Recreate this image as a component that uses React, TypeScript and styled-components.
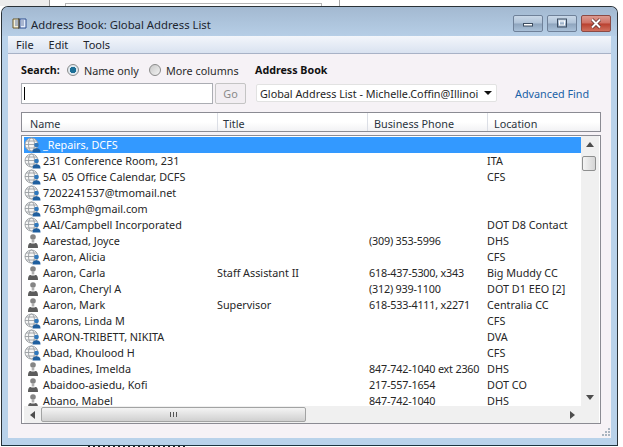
import React from 'react';
import styled, { createGlobalStyle } from 'styled-components';

const GlobalStyle = createGlobalStyle`
  html, body {
    margin: 0;
    padding: 0;
    background: #fff;
  }
  body {
    font-family: 'Noto Sans', 'Open Sans', sans-serif;
    font-size: 10.8px;
    color: #262626;
  }
`;

const Screen = styled.div`
  position: relative;
  width: 623px;
  height: 447px;
  overflow: hidden;
  background: #fff;
`;

const BackdropLeft = styled.div`
  position: absolute;
  left: 0;
  top: 0;
  width: 49px;
  height: 6px;
  background: #ececec;
  border-right: 1px solid #9a9a9a;
`;

const BackdropRule = styled.div`
  position: absolute;
  left: 65px;
  top: 3px;
  width: 255px;
  height: 3px;
  border-top: 1px solid #b5b5b5;
  border-left: 1px solid #b5b5b5;
  border-right: 1px solid #b5b5b5;
`;

const BackdropLine = styled.div`
  position: absolute;
  left: 339px;
  top: 0;
  width: 1px;
  height: 6px;
  background: #a8a8a8;
`;

const BackdropTicks = styled.div`
  position: absolute;
  left: 88px;
  top: 446px;
  width: 98px;
  height: 1px;
  background: repeating-linear-gradient(90deg, #222 0 2px, #fff 2px 5px);
`;

const Window = styled.div`
  position: absolute;
  left: 1px;
  top: 6px;
  width: 617px;
  height: 440px;
  box-sizing: border-box;
  display: flex;
  flex-direction: column;
  border: 1px solid #2a3238;
  border-bottom-color: #1d3540;
  border-radius: 7px 7px 0 0;
  background: #b9d2ea;
  overflow: hidden;
`;

const TitleBar = styled.div`
  height: 29px;
  flex: none;
  display: flex;
  align-items: center;
  padding: 4px 6px 0 10px;
  box-sizing: border-box;
  background: linear-gradient(#a3b9d1, #b6cee6);
`;

const TitleText = styled.div`
  flex: 1;
  margin: 2px 0 0 4px;
  font-size: 11.3px;
  color: #1d2630;
  white-space: nowrap;
`;

const WinButtons = styled.div`
  display: flex;
  gap: 4px;
  margin-top: -1px;
`;

const WinButton = styled.div<{ $close?: boolean }>`
  width: 28px;
  height: 15px;
  border: 1px solid ${(p) => (p.$close ? '#8c4a44' : '#6f8199')};
  border-radius: 2px;
  display: flex;
  align-items: center;
  justify-content: center;
  box-sizing: content-box;
  background: ${(p) =>
    p.$close
      ? 'linear-gradient(#dc9a90 0%, #cf7064 48%, #b8402f 52%, #d0705e 100%)'
      : 'linear-gradient(#c9d8e8 0%, #b0c3d8 48%, #8ea4bd 52%, #a9c0d8 100%)'};
`;

const Body = styled.div`
  flex: 1;
  display: flex;
  flex-direction: column;
  margin: 0 6px 7px 6px;
  min-height: 0;
`;

const MenuBar = styled.div`
  height: 18px;
  flex: none;
  display: flex;
  align-items: center;
  gap: 15px;
  padding-left: 8px;
  box-sizing: border-box;
  background: linear-gradient(#f3f6fb, #d9e2f0);
  border-bottom: 1px solid #a8b2c6;
  font-size: 11px;
  color: #20242c;
`;

const Content = styled.div`
  flex: 1;
  display: flex;
  flex-direction: column;
  padding: 8px 11px 13px 13px;
  background: #f6f2f6;
  min-height: 0;
`;

const SearchRow = styled.div`
  display: flex;
  align-items: center;
  height: 16px;
`;

const BoldLabel = styled.span`
  font-weight: 700;
  font-size: 10.7px;
  color: #111;
`;

const SearchLabel = styled(BoldLabel)`
  width: 38px;
  margin-right: 8px;
`;

const RadioLabel = styled.label<{ $width: number }>`
  display: flex;
  align-items: center;
  gap: 5px;
  width: ${(p) => p.$width}px;
  color: #2a2a2a;
`;

const RadioDot = styled.span<{ $checked?: boolean }>`
  width: 10px;
  height: 10px;
  border-radius: 50%;
  border: 1px solid #8a8a8a;
  background: ${(p) =>
    p.$checked
      ? 'radial-gradient(circle, #1c6f97 0 3px, #dfe9f0 3.5px)'
      : 'linear-gradient(135deg, #c8c8c8, #f4f4f4)'};
`;

const InputRow = styled.div`
  display: flex;
  align-items: center;
  margin-top: 5px;
  height: 20px;
`;

const SearchInput = styled.div`
  width: 188px;
  height: 19px;
  border: 1px solid #abadb3;
  background: #fff;
  display: flex;
  align-items: center;
  padding-left: 2px;
  box-sizing: content-box;
`;

const Caret = styled.span`
  width: 1px;
  height: 13px;
  background: #000;
`;

const GoButton = styled.div`
  width: 29px;
  height: 19px;
  margin-left: 2px;
  border: 1px solid #c4c4c4;
  border-radius: 2px;
  background: #f2eef2;
  color: #8a8a8a;
  display: flex;
  align-items: center;
  justify-content: center;
`;

const BookSelect = styled.div`
  width: 241px;
  height: 18px;
  margin-left: 10px;
  border: 1px solid #e2e2e2;
  border-radius: 2px;
  background: #fff;
  display: flex;
  align-items: center;
  box-sizing: border-box;
  padding: 0 4px 0 3px;
  overflow: hidden;
  white-space: nowrap;
`;

const SelectText = styled.span`
  flex: 1;
  overflow: hidden;
  color: #1f1f1f;
`;

const Arrow = styled.span`
  flex: none;
  margin-left: 6px;
  width: 0;
  height: 0;
  border-left: 4px solid transparent;
  border-right: 4px solid transparent;
  border-top: 4px solid #111;
`;

const AdvancedFind = styled.span`
  margin-left: 18px;
  color: #1a62a6;
  white-space: nowrap;
`;

const Header = styled.div`
  margin-top: 9px;
  width: 580px;
  height: 20px;
  flex: none;
  box-sizing: border-box;
  border: 1px solid #8b8b93;
  background: linear-gradient(#fff 0%, #fff 50%, #f2f2f4 100%);
  display: grid;
  grid-template-columns: 195px 150px 120px 1fr;
`;

const HeaderCell = styled.div<{ $indent: number }>`
  display: flex;
  align-items: center;
  padding: 2px 0 0 ${(p) => p.$indent}px;
  border-left: 1px solid #dcdfe6;
  color: #2b3440;
  &:first-child {
    border-left: none;
  }
`;

const ListBox = styled.div`
  margin-top: 3px;
  width: 580px;
  height: 289px;
  flex: none;
  box-sizing: border-box;
  border: 1px solid #8b8b93;
  background: #fff;
  padding: 1px 0 0 2px;
  display: grid;
  grid-template-columns: 557px 18px;
  grid-template-rows: 269px 17px;
`;

const Rows = styled.div`
  overflow: hidden;
`;

const Row = styled.div<{ $selected?: boolean }>`
  height: 16px;
  box-sizing: border-box;
  padding-bottom: 1px;
  display: grid;
  grid-template-columns: 19px 174px 152px 118px 1fr;
  align-items: center;
  white-space: pre;
  color: ${(p) => (p.$selected ? '#fff' : '#262626')};
  background: ${(p) => (p.$selected ? '#3399ff' : 'transparent')};
`;

const IconCell = styled.span`
  display: flex;
  align-items: center;
  justify-content: center;
  padding-right: 1px;
  margin-bottom: -1px;
`;

const PhoneCell = styled.span`
  letter-spacing: -0.2px;
`;

const VScroll = styled.div`
  display: flex;
  flex-direction: column;
  background: #f0f0f0;
  margin-top: -1px;
`;

const HScroll = styled.div`
  display: flex;
  align-items: center;
  background: #f0f0f0;
`;

const ScrollEnd = styled.div`
  width: 17px;
  height: 17px;
  flex: none;
  display: flex;
  align-items: center;
  justify-content: center;
`;

const VThumb = styled.div`
  width: 14px;
  height: 15px;
  margin: 3px 0 0 1px;
  border: 1px solid #8e8f8f;
  border-radius: 2px;
  box-sizing: border-box;
  background: linear-gradient(90deg, #f4f4f4, #d5d5d5);
`;

const HThumb = styled.div`
  flex: none;
  width: 265px;
  height: 15px;
  border: 1px solid #a2a3a3;
  border-radius: 2px;
  box-sizing: border-box;
  background: linear-gradient(#f4f4f4, #d0d0d0);
  display: flex;
  align-items: center;
  justify-content: center;
`;

const Grip = styled.div`
  width: 1px;
  height: 5px;
  margin: 0 1px;
  background: #555;
`;

const Spacer = styled.div`
  flex: 1;
`;

const Corner = styled.div`
  background: #f0f0f0;
`;

const ResizeGrip = styled.svg`
  position: absolute;
  right: 6px;
  bottom: 8px;
`;

const BookIcon = () => (
  <svg width="15" height="13" viewBox="0 0 15 13">
    <path d="M1 2h6v9H1z" fill="#f3f0dc" stroke="#6d5a2a" />
    <path d="M8 2h6v9H8z" fill="#e6eefb" stroke="#2f4f8f" />
    <path d="M3 4h3M3 6h3M3 8h3M9 4h3M9 6h3M9 8h3" stroke="#6a7ea6" strokeWidth="1" />
    <path d="M7 1v11" stroke="#3a3a3a" />
  </svg>
);

const GlobeIcon = () => (
  <svg width="18" height="16" viewBox="0 0 18 16">
    <g fill="none" stroke="#9a9ea3" strokeWidth="0.9">
      <circle cx="7.5" cy="7.5" r="6.5" fill="#f6f6f6" />
      <ellipse cx="7.5" cy="7.5" rx="3" ry="6.5" />
      <path d="M1 7.5h13M2 4h11M2 11h11" />
    </g>
    <circle cx="12.5" cy="8" r="2.3" fill="#2f78bd" />
    <path d="M8.500 15.500c0-3 1.500-4.300 4-4.300s4 1.300 4 4.300z" fill="#1f5f9f" />
  </svg>
);

const PersonIcon = () => (
  <svg width="16" height="16" viewBox="0 0 16 16">
    <circle cx="8" cy="4" r="2.800" fill="#858585" />
    <path d="M6.700 7h2.600v2.500H6.700z" fill="#b0b0b0" />
    <path d="M3 15c0-3 .5-5 2.700-5 .7.700 3.900.700 4.600 0 2.200 0 2.700 2 2.700 5z" fill="#5c5c5c" />
  </svg>
);

type Entry = {
  kind: 'globe' | 'person';
  name: string;
  title?: string;
  phone?: string;
  location?: string;
};

const entries: Entry[] = [
  { kind: 'globe', name: '_Repairs, DCFS' },
  { kind: 'globe', name: '231 Conference Room, 231', location: 'ITA' },
  { kind: 'globe', name: '5A  05 Office Calendar, DCFS', location: 'CFS' },
  { kind: 'globe', name: '7202241537@tmomail.net' },
  { kind: 'globe', name: '763mph@gmail.com' },
  { kind: 'globe', name: 'AAI/Campbell Incorporated', location: 'DOT D8 Contact' },
  { kind: 'person', name: 'Aarestad, Joyce', phone: '(309) 353-5996', location: 'DHS' },
  { kind: 'globe', name: 'Aaron, Alicia', location: 'CFS' },
  { kind: 'person', name: 'Aaron, Carla', title: 'Staff Assistant II', phone: '618-437-5300, x343', location: 'Big Muddy CC' },
  { kind: 'person', name: 'Aaron, Cheryl A', phone: '(312) 939-1100', location: 'DOT D1 EEO [2]' },
  { kind: 'person', name: 'Aaron, Mark', title: 'Supervisor', phone: '618-533-4111, x2271', location: 'Centralia CC' },
  { kind: 'globe', name: 'Aarons, Linda M', location: 'CFS' },
  { kind: 'globe', name: 'AARON-TRIBETT, NIKITA', location: 'DVA' },
  { kind: 'globe', name: 'Abad, Khoulood H', location: 'CFS' },
  { kind: 'person', name: 'Abadines, Imelda', phone: '847-742-1040 ext 2360', location: 'DHS' },
  { kind: 'person', name: 'Abaidoo-asiedu, Kofi', phone: '217-557-1654', location: 'DOT CO' },
  { kind: 'person', name: 'Abano, Mabel', phone: '847-742-1040', location: 'DHS' },
];

const App = () => {
  return (
    <Screen>
      <GlobalStyle />
      <BackdropLeft />
      <BackdropRule />
      <BackdropLine />
      <BackdropTicks />
      <Window>
        <TitleBar>
          <BookIcon />
          <TitleText>Address Book: Global Address List</TitleText>
          <WinButtons>
            <WinButton>
              <svg width="12" height="8" viewBox="0 0 12 8">
                <rect x="1.500" y="4.500" width="9" height="2.500" fill="#fff" stroke="#3c4c60" />
              </svg>
            </WinButton>
            <WinButton>
              <svg width="12" height="10" viewBox="0 0 12 10">
                <rect x="1.500" y="1" width="9" height="8" fill="none" stroke="#3c4c60" />
                <rect x="3.500" y="3" width="5" height="4" fill="none" stroke="#fff" />
              </svg>
            </WinButton>
            <WinButton $close>
              <svg width="14" height="11" viewBox="0 0 14 11">
                <path d="M3 1.500l8 8M11 1.500l-8 8" stroke="#5a2a28" strokeWidth="3.400" />
                <path d="M3 1.500l8 8M11 1.500l-8 8" stroke="#fff" strokeWidth="2" />
              </svg>
            </WinButton>
          </WinButtons>
        </TitleBar>
        <Body>
          <MenuBar>
            <span>File</span>
            <span>Edit</span>
            <span>Tools</span>
          </MenuBar>
          <Content>
            <SearchRow>
              <SearchLabel>Search:</SearchLabel>
              <RadioLabel $width={82}>
                <RadioDot $checked />
                Name only
              </RadioLabel>
              <RadioLabel $width={106}>
                <RadioDot />
                More columns
              </RadioLabel>
              <BoldLabel>Address Book</BoldLabel>
            </SearchRow>
            <InputRow>
              <SearchInput>
                <Caret />
              </SearchInput>
              <GoButton>Go</GoButton>
              <BookSelect>
                <SelectText>Global Address List - Michelle.Coffin@Illinois.gov</SelectText>
                <Arrow />
              </BookSelect>
              <AdvancedFind>Advanced Find</AdvancedFind>
            </InputRow>
            <Header>
              <HeaderCell $indent={8}>Name</HeaderCell>
              <HeaderCell $indent={5}>Title</HeaderCell>
              <HeaderCell $indent={6}>Business Phone</HeaderCell>
              <HeaderCell $indent={6}>Location</HeaderCell>
            </Header>
            <ListBox>
              <Rows>
                {entries.map((entry, i) => (
                  <Row key={entry.name} $selected={i === 0}>
                    <IconCell>{entry.kind === 'globe' ? <GlobeIcon /> : <PersonIcon />}</IconCell>
                    <span>{entry.name}</span>
                    <span>{entry.title}</span>
                    <PhoneCell>{entry.phone}</PhoneCell>
                    <span>{entry.location}</span>
                  </Row>
                ))}
              </Rows>
              <VScroll>
                <ScrollEnd>
                  <svg width="8" height="5" viewBox="0 0 8 5">
                    <path d="M4 0l4 5H0z" fill="#4d4d4d" />
                  </svg>
                </ScrollEnd>
                <VThumb />
                <Spacer />
                <ScrollEnd>
                  <svg width="8" height="5" viewBox="0 0 8 5">
                    <path d="M4 5l4-5H0z" fill="#4d4d4d" />
                  </svg>
                </ScrollEnd>
              </VScroll>
              <HScroll>
                <ScrollEnd>
                  <svg width="5" height="8" viewBox="0 0 5 8">
                    <path d="M0 4l5-4v8z" fill="#4d4d4d" />
                  </svg>
                </ScrollEnd>
                <HThumb>
                  <Grip />
                  <Grip />
                  <Grip />
                </HThumb>
                <Spacer />
                <ScrollEnd>
                  <svg width="5" height="8" viewBox="0 0 5 8">
                    <path d="M5 4L0 0v8z" fill="#4d4d4d" />
                  </svg>
                </ScrollEnd>
              </HScroll>
              <Corner />
            </ListBox>
          </Content>
        </Body>
        <ResizeGrip width="9" height="9" viewBox="0 0 9 9">
          <path d="M6 0h2v2H6zM3 3h2v2H3zM6 3h2v2H6zM0 6h2v2H0zM3 6h2v2H3zM6 6h2v2H6z" fill="#a9b4c0" />
        </ResizeGrip>
      </Window>
    </Screen>
  );
};

export default App;
